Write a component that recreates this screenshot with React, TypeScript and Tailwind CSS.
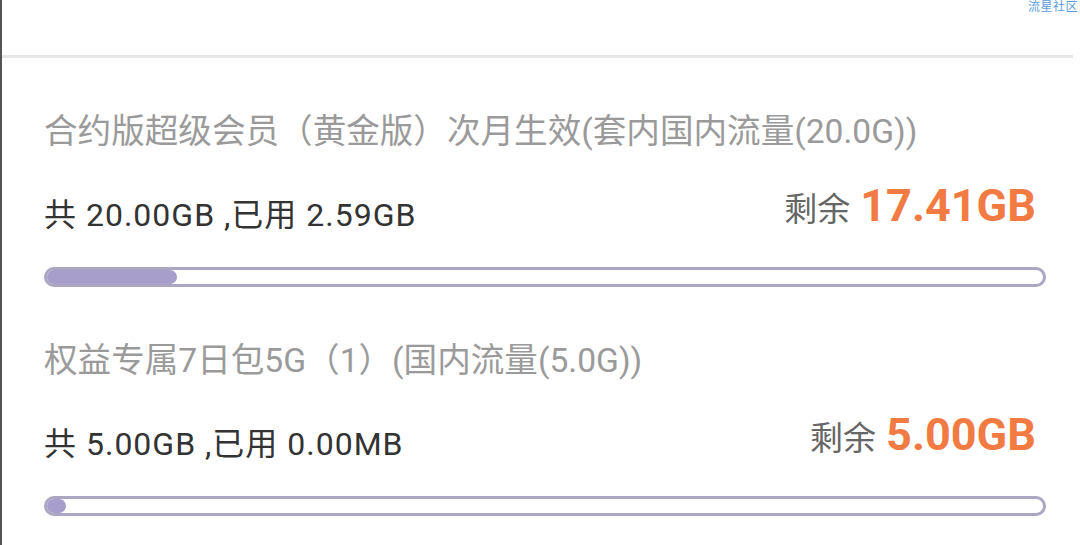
const PACKAGES = [
  {
    name: "合约版超级会员（黄金版）次月生效(套内国内流量(20.0G))",
    total: "20.00GB",
    used: "2.59GB",
    left: "17.41GB",
    fill: 133,
  },
  {
    name: "权益专属7日包5G（1）(国内流量(5.0G))",
    total: "5.00GB",
    used: "0.00MB",
    left: "5.00GB",
    fill: 22,
  },
];

export default function App() {
  return (
    <main
      className="relative w-[1080px] h-[545px] overflow-hidden bg-white border-l-2 border-[#555555]"
      style={{ fontFamily: 'Roboto, "Noto Sans CJK SC", sans-serif' }}
    >
      {/* watermark */}
      <span className="absolute right-[2px] top-[-2px] text-[12px] text-[#5b9be0] tracking-[0.5px]">
        流星社区
      </span>

      <div className="h-[55px]" />
      <div className="h-[3px] mr-[7px] bg-[#e7e7e7]" />

      <div className="pl-[42px] pr-[34px]">
        {PACKAGES.map((p, i) => (
          <section key={i} className="pt-[50px]">
            <div className="h-[48px] flex items-center text-[33.6px] text-[#9a9a9a] whitespace-nowrap">
              {p.name}
            </div>

            <div className="mt-[35px] h-[48px] flex items-center justify-between whitespace-nowrap">
              <span className="text-[32px] tracking-[1px] text-[#333333]">
                共 {p.total} ,已用 {p.used}
              </span>
              <span className="flex items-baseline gap-[10px] mb-[12px] pr-[10px]">
                <span className="text-[33px] text-[#666666]">剩余</span>
                <span className="text-[45px] font-bold text-[#f27a43] leading-none">{p.left}</span>
              </span>
            </div>

            <div className="mt-[28px] h-[20px] rounded-full border-[3px] border-[#aba6c2] overflow-hidden">
              <div
                className="h-full rounded-full bg-[#a89ecb] -ml-[3px]"
                style={{ width: p.fill }}
              />
            </div>
          </section>
        ))}
      </div>
    </main>
  );
}
